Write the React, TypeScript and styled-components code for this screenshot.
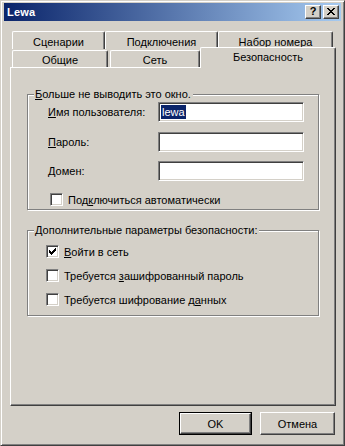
import React from "react";
import styled, { createGlobalStyle } from "styled-components";

const Global = createGlobalStyle`
  html, body { margin: 0; padding: 0; background: #d4d0c8; }
  body { font-family: "Liberation Sans", Arial, sans-serif; font-size: 11px; color: #000; }
`;

const Window = styled.div`
  width: 345px;
  height: 446px;
  box-sizing: border-box;
  background: #d4d0c8;
  border-top: 1px solid #d4d0c8;
  border-left: 1px solid #d4d0c8;
  border-right: 1px solid #404040;
  border-bottom: 1px solid #404040;
  box-shadow: inset 1px 1px 0 #fff, inset -1px -1px 0 #808080;
  padding: 2px 3px 3px 3px;
  display: flex;
  flex-direction: column;
`;

const TitleBar = styled.div`
  height: 18px;
  background: linear-gradient(to right, #0a246a, #a6caf0);
  display: flex;
  align-items: center;
  padding: 0 2px 0 3px;
  flex-shrink: 0;
`;

const Title = styled.div`
  flex: 1;
  color: #fff;
  font-weight: bold;
  font-size: 11px;
  letter-spacing: 0.2px;
`;

const CaptionButton = styled.div<{ $gap?: number }>`
  width: 16px;
  height: 14px;
  box-sizing: border-box;
  background: #d4d0c8;
  border-top: 1px solid #fff;
  border-left: 1px solid #fff;
  border-right: 1px solid #404040;
  border-bottom: 1px solid #404040;
  box-shadow: inset -1px -1px 0 #808080;
  margin-left: ${(p) => p.$gap ?? 0}px;
  display: flex;
  align-items: center;
  justify-content: center;
  font-weight: bold;
  font-size: 11px;
  line-height: 1;
  padding-bottom: 1px;
`;

const Body = styled.div`
  flex: 1;
  display: flex;
  flex-direction: column;
  padding: 10px 5px 0 6px;
`;

const TabRow = styled.div<{ $top?: number }>`
  display: flex;
  align-items: flex-end;
  padding-left: 2px;
  margin-top: ${(p) => p.$top ?? 0}px;
  position: relative;
  z-index: 1;
`;

const Tab = styled.div<{ $w: number; $h: number; $ml?: number; $sel?: boolean; $pt?: number }>`
  width: ${(p) => p.$w}px;
  height: ${(p) => p.$h}px;
  margin-left: ${(p) => p.$ml ?? 0}px;
  margin-bottom: ${(p) => (p.$sel ? -1 : 0)}px;
  box-sizing: border-box;
  background: #d4d0c8;
  border-top: 1px solid #fff;
  border-left: 1px solid #fff;
  border-right: 1px solid #404040;
  border-radius: 2px 2px 0 0;
  box-shadow: inset -1px 0 0 #808080;
  text-align: center;
  padding-top: ${(p) => p.$pt ?? 3}px;
  white-space: nowrap;
  font-size: 11px;
  position: relative;
  z-index: ${(p) => (p.$sel ? 2 : 1)};
`;

const Panel = styled.div`
  height: 339px;
  box-sizing: border-box;
  border-top: 1px solid #fff;
  border-left: 1px solid #fff;
  border-right: 1px solid #404040;
  border-bottom: 1px solid #404040;
  box-shadow: inset -1px -1px 0 #808080;
  padding: 26px 0 0 16px;
  display: flex;
  flex-direction: column;
`;

const Group = styled.div<{ $h: number; $mt?: number }>`
  position: relative;
  width: 292px;
  height: ${(p) => p.$h}px;
  box-sizing: border-box;
  border: 1px solid #808080;
  box-shadow: inset 1px 1px 0 #fff, 1px 1px 0 #fff;
  margin-top: ${(p) => p.$mt ?? 0}px;
`;

const Legend = styled.div`
  position: absolute;
  left: 6px;
  top: -7px;
  padding: 0 2px 0 1px;
  background: #d4d0c8;
  line-height: 13px;
  white-space: nowrap;
`;

const FieldGrid = styled.div`
  display: grid;
  grid-template-columns: 110px 146px;
  grid-auto-rows: 20px;
  row-gap: 9.5px;
  padding: 7px 0 0 20px;
  align-items: center;
`;

const FieldLabel = styled.div`
  white-space: nowrap;
`;

const Input = styled.div`
  height: 20px;
  box-sizing: border-box;
  background: #fff;
  border-top: 1px solid #808080;
  border-left: 1px solid #808080;
  border-right: 1px solid #fff;
  border-bottom: 1px solid #fff;
  box-shadow: inset 1px 1px 0 #404040, inset -1px -1px 0 #d4d0c8;
  padding: 2px 0 0 2px;
  display: flex;
  align-items: flex-start;
`;

const Selected = styled.span`
  background: #0a246a;
  color: #fff;
  line-height: 14px;
  padding: 0 1px;
`;

const CheckRow = styled.div<{ $ml: number; $mt: number }>`
  display: flex;
  align-items: center;
  margin-left: ${(p) => p.$ml}px;
  margin-top: ${(p) => p.$mt}px;
  height: 13px;
  white-space: nowrap;
`;

const Box = styled.div`
  width: 13px;
  height: 13px;
  box-sizing: border-box;
  background: #fff;
  border-top: 1px solid #808080;
  border-left: 1px solid #808080;
  border-right: 1px solid #fff;
  border-bottom: 1px solid #fff;
  box-shadow: inset 1px 1px 0 #404040, inset -1px -1px 0 #d4d0c8;
  margin-right: 5px;
  display: flex;
  align-items: center;
  justify-content: center;
  flex-shrink: 0;
`;

const GroupBody = styled.div<{ $pt: number }>`
  display: flex;
  flex-direction: column;
  padding-top: ${(p) => p.$pt}px;
`;

const Footer = styled.div`
  display: flex;
  justify-content: flex-end;
  padding: 6px 1px 0 0;
`;

const Button = styled.div<{ $default?: boolean; $ml?: number }>`
  width: ${(p) => (p.$default ? 73 : 75)}px;
  height: 23px;
  box-sizing: border-box;
  margin-left: ${(p) => p.$ml ?? 0}px;
  background: #d4d0c8;
  border: 1px solid ${(p) => (p.$default ? "#000" : "transparent")};
  display: flex;
`;

const ButtonFace = styled.div`
  flex: 1;
  display: flex;
  align-items: center;
  justify-content: center;
  border-top: 1px solid #fff;
  border-left: 1px solid #fff;
  border-right: 1px solid #404040;
  border-bottom: 1px solid #404040;
  box-shadow: inset -1px -1px 0 #808080;
  font-size: 11px;
`;

const PlainButton = styled.div<{ $ml?: number }>`
  width: 75px;
  height: 23px;
  box-sizing: border-box;
  margin-left: ${(p) => p.$ml ?? 0}px;
  display: flex;
  align-items: center;
  justify-content: center;
  border-top: 1px solid #fff;
  border-left: 1px solid #fff;
  border-right: 1px solid #404040;
  border-bottom: 1px solid #404040;
  box-shadow: inset -1px -1px 0 #808080;
  font-size: 11px;
`;

const CloseGlyph = () => (
  <svg width="8" height="7" viewBox="0 0 8 7">
    <path d="M0 0h2v1h1v1h2V1h1V0h2v1H7v1H6v1H5v1h1v1h1v1h1v1H6V6H5V5H3v1H2v1H0V6h1V5h1V4h1V3H2V2H1V1H0z" fill="#000" />
  </svg>
);

const CheckGlyph = () => (
  <svg width="7" height="7" viewBox="0 0 7 7">
    <path d="M6 0h1v3H6v1H5v1H4v1H3v1H2V6H1V5H0V2h1v1h1v1h1V3h1V2h1V1h1z" fill="#000" />
  </svg>
);

const Check = ({ on, children, ml, mt }: { on?: boolean; children: React.ReactNode; ml: number; mt: number }) => (
  <CheckRow $ml={ml} $mt={mt}>
    <Box>{on ? <CheckGlyph /> : null}</Box>
    <span>{children}</span>
  </CheckRow>
);

export default function App() {
  return (
    <>
      <Global />
      <Window>
        <TitleBar>
          <Title>Lewa</Title>
          <CaptionButton>?</CaptionButton>
          <CaptionButton $gap={2}>
            <CloseGlyph />
          </CaptionButton>
        </TitleBar>
        <Body>
          <TabRow>
            <Tab $w={93} $h={18} $pt={4}>Сценарии</Tab>
            <Tab $w={113} $h={18} $pt={4}>Подключения</Tab>
            <Tab $w={115} $h={18} $pt={4}>Набор номера</Tab>
          </TabRow>
          <TabRow $top={-2}>
            <Tab $w={96} $h={17} $pt={3}>Общие</Tab>
            <Tab $w={90} $h={17} $ml={2} $pt={3}>Сеть</Tab>
            <Tab $w={136} $h={21} $sel $pt={3}>Безопасность</Tab>
          </TabRow>
          <Panel>
            <Group $h={116}>
              <Legend>
                <u>Б</u>ольше не выводить это окно.
              </Legend>
              <FieldGrid>
                <FieldLabel>
                  <u>И</u>мя пользователя:
                </FieldLabel>
                <Input>
                  <Selected>lewa</Selected>
                </Input>
                <FieldLabel>
                  <u>П</u>ароль:
                </FieldLabel>
                <Input />
                <FieldLabel>
                  <u>Д</u>омен:
                </FieldLabel>
                <Input />
              </FieldGrid>
              <Check ml={22} mt={12}>
                Под<u>к</u>лючиться автоматически
              </Check>
            </Group>
            <Group $h={86} $mt={20}>
              <Legend>Дополнительные параметры безопасности:</Legend>
              <GroupBody $pt={14}>
                <Check on ml={18} mt={0}>
                  <u>В</u>ойти в сеть
                </Check>
                <Check ml={18} mt={11}>
                  Требуется <u>з</u>ашифрованный пароль
                </Check>
                <Check ml={18} mt={11}>
                  Требуется шифрование д<u>а</u>нных
                </Check>
              </GroupBody>
            </Group>
          </Panel>
          <Footer>
            <Button $default>
              <ButtonFace>OK</ButtonFace>
            </Button>
            <PlainButton $ml={8}>Отмена</PlainButton>
          </Footer>
        </Body>
      </Window>
    </>
  );
}
